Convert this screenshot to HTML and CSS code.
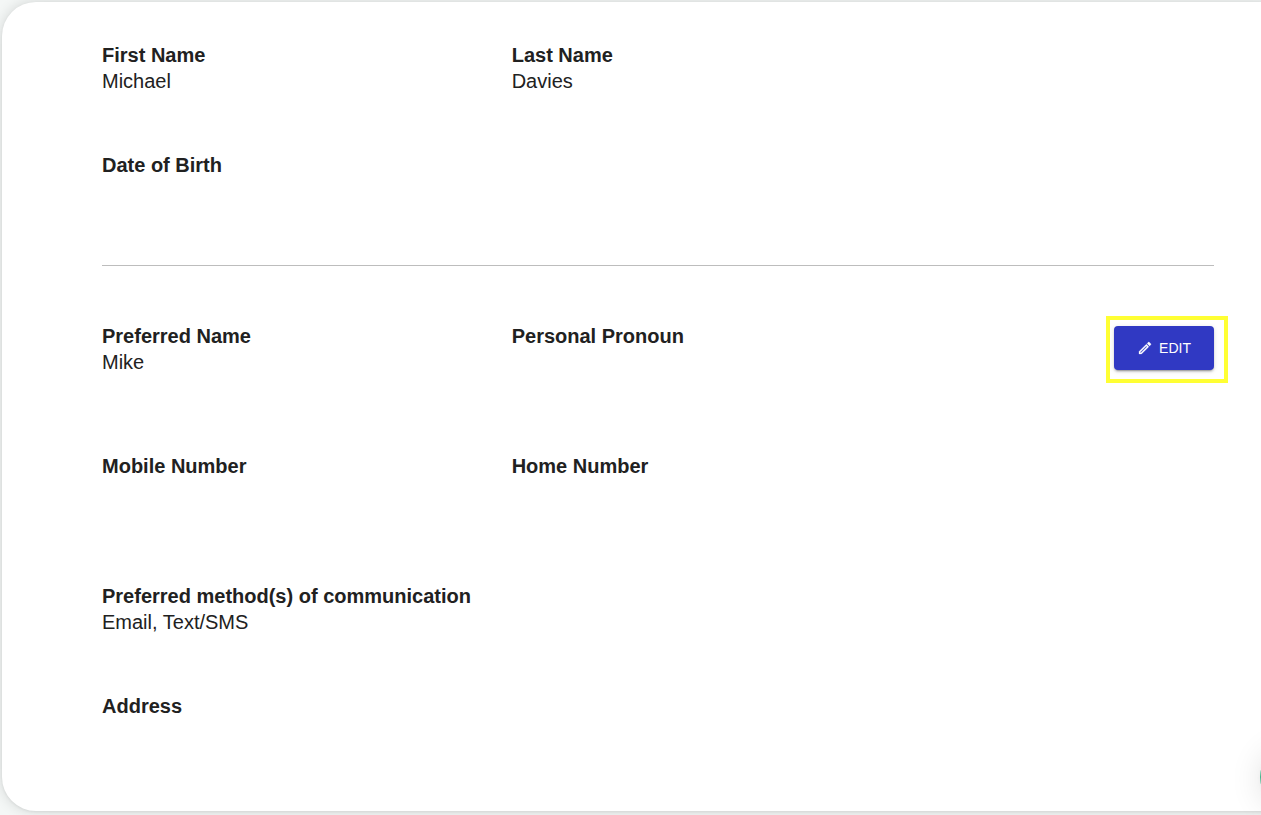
FILE: index.html
```html
<!DOCTYPE html>
<html lang="en">
<head>
  <meta charset="utf-8">
  <meta name="viewport" content="width=device-width, initial-scale=1">
  <title>Personal details</title>
  <link rel="stylesheet" href="styles.css">
</head>
<body>
  <main class="card">
    <section class="group">
      <dl class="fields">
        <div class="field"><dt>First Name</dt><dd>Michael</dd></div>
        <div class="field"><dt>Last Name</dt><dd>Davies</dd></div>
        <div class="field"><dt>Date of Birth</dt><dd></dd></div>
      </dl>
    </section>
    <hr class="divider">
    <section class="group">
      <dl class="fields fields-contact">
        <div class="field"><dt>Preferred Name</dt><dd>Mike</dd></div>
        <div class="field"><dt>Personal Pronoun</dt><dd></dd></div>
        <div class="field"><dt>Mobile Number</dt><dd></dd></div>
        <div class="field"><dt>Home Number</dt><dd></dd></div>
        <div class="field field-wide"><dt>Preferred method(s) of communication</dt><dd>Email, Text/SMS</dd></div>
        <div class="field field-wide"><dt>Address</dt><dd></dd></div>
      </dl>
      <div class="highlight">
        <button class="edit" type="button">
          <svg class="edit-icon" viewBox="0 0 24 24" aria-hidden="true"><path d="M14.06 9.02l.92.92L5.92 19H5v-.92l9.06-9.06M17.66 3c-.25 0-.51.1-.7.29l-1.83 1.83 3.75 3.75 1.83-1.83c.39-.39.39-1.02 0-1.41l-2.34-2.34c-.2-.2-.45-.29-.71-.29zm-3.6 3.19L3 17.25V21h3.75L17.81 9.94l-3.75-3.75z"/></svg>
          EDIT
        </button>
      </div>
    </section>
  </main>
  <button class="chat" type="button" aria-label="Open chat"></button>
</body>
</html>
```

FILE: styles.css
```css
* {
  box-sizing: border-box;
}

body {
  margin: 0;
  min-height: 100vh;
  padding: 2px 0 4px 2px;
  display: flex;
  flex-direction: column;
  overflow-x: hidden;
  background: #f4f7f6;
  color: #212121;
  font: 20px/26px "Liberation Sans", Arial, sans-serif;
}

.card {
  flex: 1;
  margin-right: -40px;
  padding: 40px 87px 40px 100px;
  border-radius: 34px;
  background: #fff;
  box-shadow: 0 1px 3px rgba(0, 0, 0, 0.06), 0 0 14px rgba(0, 0, 0, 0.14);
}

.group {
  display: flex;
  align-items: flex-start;
}

.fields {
  flex: 1;
  margin: 0;
  display: grid;
  grid-template-columns: 7fr 12fr;
  row-gap: 58px;
}

.fields-contact {
  margin-right: -108px;
  grid-template-rows: 72px 72px 52px 52px;
}

.field-wide {
  grid-column: 1 / -1;
}

.field dt {
  font-weight: 700;
}

.field dd {
  margin: 0;
  min-height: 26px;
}

.divider {
  height: 1px;
  margin: 61px 0 57px;
  border: 0;
  background: #bdbdbd;
}

.highlight {
  position: relative;
  margin: -7px -14px 0 0;
  padding: 6px 10px 9px 4px;
  border: 4px solid #ffff33;
}

.edit {
  display: flex;
  align-items: center;
  justify-content: center;
  gap: 6px;
  width: 100px;
  height: 44px;
  padding: 0;
  border: 0;
  border-radius: 4px;
  background: #3039c3;
  color: #fff;
  font: 14px/24px "Liberation Sans", Arial, sans-serif;
  box-shadow: 0 3px 1px -2px rgba(0, 0, 0, 0.2), 0 2px 2px rgba(0, 0, 0, 0.14), 0 1px 5px rgba(0, 0, 0, 0.12);
  cursor: pointer;
}

.edit-icon {
  width: 16px;
  height: 16px;
  fill: currentColor;
  stroke: currentColor;
  stroke-width: 0.4;
}

.chat {
  position: fixed;
  right: -59px;
  bottom: 8px;
  width: 60px;
  height: 60px;
  padding: 0;
  border: 0;
  border-radius: 50%;
  background: #3fb489;
  box-shadow: 0 1px 6px rgba(0, 0, 0, 0.04), 0 2px 32px rgba(0, 0, 0, 0.12);
}
```
